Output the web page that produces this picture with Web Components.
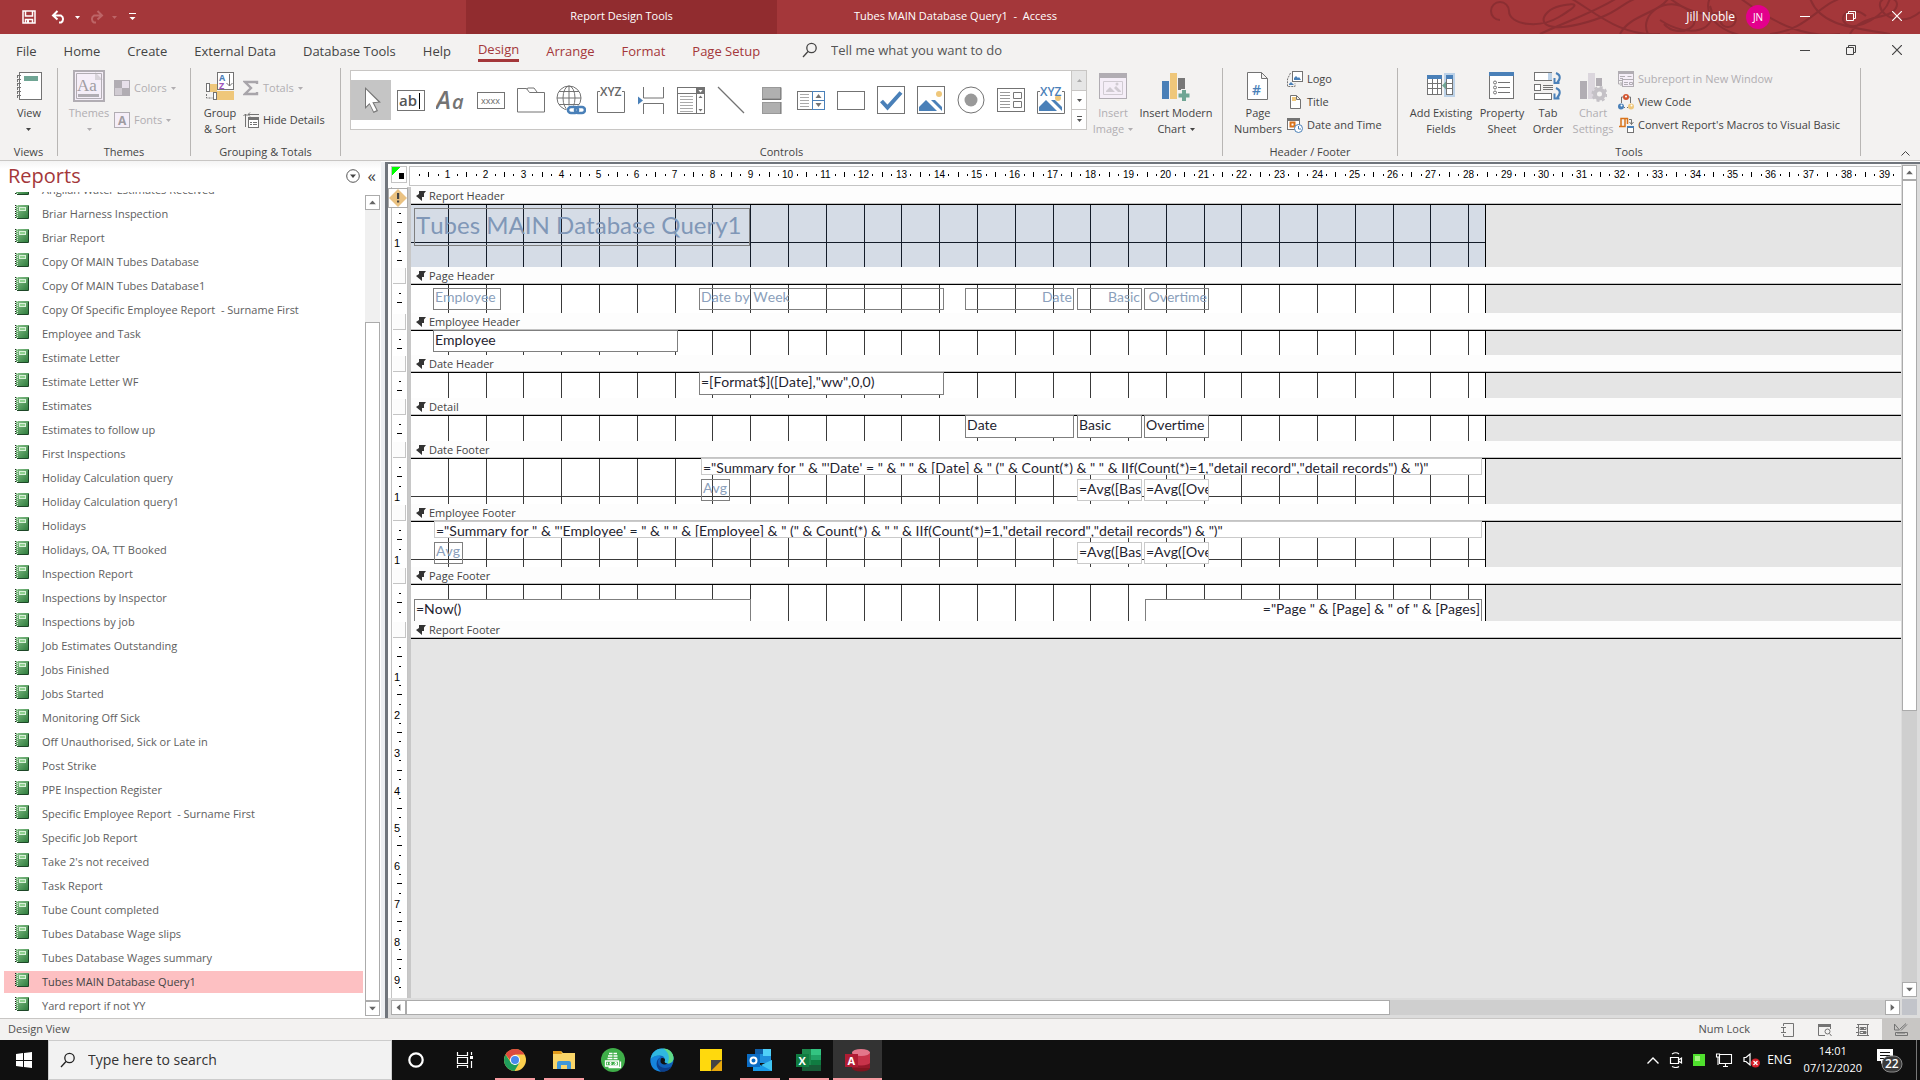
<!DOCTYPE html>
<html lang="en">
<head>
<meta charset="utf-8">
<title>Tubes MAIN Database Query1 - Access</title>
<style>
html,body{margin:0;height:100%;overflow:hidden}
body{font:11px/16px "Open Sans","Noto Sans",sans-serif;color:#444;background:#fff}
</style>
</head>
<body>
<access-app></access-app>
<script>
const BASE = `*{box-sizing:border-box}button{font:inherit;color:inherit;background:none;border:0;padding:0;margin:0}button,input{outline:0}`;
function define(name, render, after) {
  customElements.define(name, class extends HTMLElement {
    connectedCallback() {
      if (this.shadowRoot) return;
      const root = this.attachShadow({ mode: 'open' });
      root.innerHTML = `<style>${BASE}</style>` + render(this);
      if (after) after(this, root);
    }
  });
}

/* ---------- icons: [width, height, markup] ---------- */
const G = '#737373', B = '#4a80b8', Y = '#efc77a', L = '#b1adb3', T = '#6fa594';
const s = (d, c = G, w = 1, x = '') => `<path d="${d}" fill="none" stroke="${c}" stroke-width="${w}" ${x}/>`;
const f = (d, c = G) => `<path d="${d}" fill="${c}"/>`;
const r = (x, y, w, h, c, st = 'none', sw = 1) => `<rect x="${x}" y="${y}" width="${w}" height="${h}" fill="${c}" stroke="${st}" stroke-width="${sw}"/>`;
const t = (x, y, z, txt, c = G, x2 = '') => `<text x="${x}" y="${y}" font-size="${z}" fill="${c}" font-family="Open Sans,sans-serif" ${x2}>${txt}</text>`;
const pic = (o, c1, c2) => f(`M${o} 25V21l7-7 11 11z`, c1) + f('M14 14h4l7 7v4z', c1) + `<circle cx="22" cy="8" r="3" fill="${c2}"/>`;
const ICONS = {
  save: [14, 14, s('M1 1h12v12H1z M3.5 1v5h7V1 M3.5 13V9.5h7V13', '#fff', 1.5) + r(5, 10, 2, 3, '#fff')],
  undo: [16, 14, s('M2 5.5h8a4 4 0 0 1 0 7H8 M6.5 1L2 5.5l4.5 4', '#fff', 2)],
  redo: [16, 14, s('M14 5.5H6a4 4 0 0 0 0 7h2 M9.5 1L14 5.5 9.5 9.5', '#bd6567', 2)],
  down: [5, 3, f('M0 0h5L2.5 3z', 'currentColor')],
  custom: [7, 8, f('M0 0h7v1H0z M0.5 4h6L3.5 7z', '#fff')],
  min: [10, 10, s('M0 5.5h10', 'currentColor')],
  restore: [10, 10, s('M.5 2.5h7v7h-7z M2.5 2.5v-2h7v7h-2', 'currentColor')],
  close: [10, 10, s('M0 0l10 10M10 0L0 10', 'currentColor', 1.2)],
  search: [16, 16, `<circle cx="9.5" cy="6" r="4.7" fill="none" stroke="currentColor" stroke-width="1.3"/>` + s('M6 9.5L1 15', 'currentColor', 1.3)],
  view: [28, 32, r(4.5, 2.5, 22, 27, '#fff', G) + r(9, 6, 14, 5, T) + [5, 9, 13, 17, 21, 25].map(y => s(`M2 ${y}.5h4 M2.5 ${y}v3`, G)).join('')],
  themes: [32, 32, r(1, 1, 30, 30, '#f5eef8', L, 2) + f('M22 2l8 8h-8z', '#d7d2d9') + s('M3.5 3.5h25v25h-25z', L) + t(4, 21, 17, 'Aa', '#a09ca2', 'style="font-family:Liberation Serif"') + r(5, 24, 21, 3, L)],
  colors: [16, 16, r(.5, .5, 15, 15, '#f5eef8', L) + f('M1 1h7v7H1z M8 8h7v7H8z', L) + f('M8 1h7v7H8z', '#e7e0ea') + f('M1 8h7v7H1z', '#d0cbd2')],
  fonts: [16, 16, r(.5, .5, 15, 15, '#f5eef8', L) + t(4, 13, 12, 'A', '#a09ca2', 'font-weight="700"')],
  group: [30, 32, r(12.5, 2.5, 16, 17, '#fff', G) + t(14, 11, 9, 'A', B, 'font-weight="700"') + t(14, 19, 9, 'Z', '#9d57bd', 'font-weight="700"') + s('M24.5 4v12M21.5 13l3 3 3-3', G) + r(4, 14, 8, 8, Y) + r(9, 21, 20, 9, Y) + r(1.5, 13.5, 3, 8, '#fff', G) + r(8.5, 22.5, 3, 7, '#fff', G) + s('M1.5 24v4h6', G, 1, 'stroke-dasharray="2 1"') + s('M12 20.5h17', '#f3f2f1', 1)],
  sigma: [16, 16, s('M14 4V2H2l6 6-6 6h12v-2', '#a8a5aa', 2.4)],
  hide: [16, 16, s('M2.5 2v13M.5 4l2-2 2 2M5 2.5h11M7 .5l-2 2 2 2', G) + r(5.5, 5.5, 10, 10, '#fff', G) + r(5, 5, 11, 3, G) + s('M7 10.5h2M10 10.5h4M7 12.5h2M10 12.5h4', G)],
  arrow: [28, 28, f('M8 1v22l4.500-4.500 4 8.500 4.500-2-4-8 7-.5z', '#777') + f('M9 3.500v17l3.500-3.500 4.300 8.500 2.700-1.300-4.200-8 6-.5z', '#fff')],
  textbox: [28, 28, r(.5, 4.5, 27, 20, '#fff', G) + t(2, 20, 15, 'ab', '#555', 'font-weight="600"') + s('M22.5 7v16', '#000')],
  label: [30, 28, t(0, 23, 25, 'A', G, 'font-weight="600" font-style="italic"') + t(16, 23, 20, 'a', G, 'font-weight="600" font-style="italic"')],
  button: [28, 28, r(.5, 6.5, 27, 16, '#fff', G) + t(4, 17.5, 9, 'xxxx', '#666')],
  tab: [28, 28, s('M.5 2.5h9l3 4h15v19.5H.5z M9.5 3l1.5-1h6l3 4', G)],
  link: [30, 30, `<g fill="none" stroke="${G}"><circle cx="13" cy="13" r="12"/><ellipse cx="13" cy="13" rx="6" ry="12"/><path d="M13 1v24M1 13h24M3 6.5h20M3 19.5h20"/></g><g fill="#fff" stroke="#fff" stroke-width="3"><rect x="12" y="22" width="18" height="7"/></g><g fill="none" stroke="${B}" stroke-width="2.6"><rect x="12" y="22" width="10" height="6" rx="3"/><rect x="19" y="22" width="10" height="6" rx="3"/></g>`],
  nav: [28, 28, s('M3 5.5H.5v21h27v-21H25', G) + t(3, 10, 12, 'XYZ', '#666', 'font-weight="600"')],
  brk: [28, 28, s('M6.5 1v11h20V1 M6.5 28V17.5h20V28', G) + f('M1 10.5l5 4-5 4z', B)],
  combo: [28, 28, r(.5, 1.5, 27, 26, '#fff', G) + s('M.5 7.5h27M19.5 2v26', G) + r(20, 2, 7, 6, G) + f('M21.5 4h4l-2 2.5z', '#fff') + s('M3 10.5h13M3 13.5h13M3 16.5h13M3 19.5h13M3 22.5h13M3 25.5h13', '#aaa') + f('M21.5 12h4l-2-2.5z M21.5 23h4l-2 2.5z')],
  line: [28, 28, s('M1 1l26 26', G, 1.2)],
  toggle: [28, 28, r(5.5, 1.5, 18, 11, '#b0b0b0', '#999') + r(5.5, 16.5, 18, 11, '#b0b0b0', '#999') + s('M5 13.5h19v-12 M24 16v12', G)],
  list: [28, 28, r(.5, 5.5, 27, 18, '#fff', G) + s('M3 8.5h9M3 11.5h9M3 14.5h9M3 17.5h9M3 20.5h9', '#aaa') + r(15.5, 5.5, 12, 18, '#fff', B) + s('M15.5 14.5h12', B) + f('M18.5 12h6l-3-4z M18.5 17h6l-3 4z')],
  rect: [28, 28, r(.5, 5.5, 27, 18, '#fff', G)],
  check: [28, 28, r(.5, .5, 27, 27, '#fff', G) + s('M4.5 15l6 6.5L24 6.5', B, 4)],
  image: [28, 28, r(.5, .5, 27, 27, '#fff', G) + pic(2, B, Y)],
  radio: [28, 28, `<circle cx="14" cy="14" r="13" fill="#fff" stroke="${G}"/><circle cx="14" cy="14" r="6.5" fill="#999"/>`],
  sub: [28, 28, r(.5, 2.5, 27, 23, '#fff', G) + s('M3 6.5h10M3 9.5h10M3 12.5h10M3 15.5h10M3 18.5h10M3 21.5h10', '#999') + s('M16.5 6.5h8v6h-8z M16.5 15.5h8v6h-8z', '#777')],
  chartimg: [28, 28, s('M3 5.5H.5v22h27v-22H25', G) + pic(2, B, 'none') + `<circle cx="21" cy="12" r="3" fill="${Y}"/>` + t(3, 10, 12, 'XYZ', B, 'font-weight="600"')],
  insimg: [28, 32, r(.5, 3.5, 27, 25, '#f5eef8', L) + r(0, 3, 28, 5, L) + s('M4.5 11.5h19v13h-19z', '#d0cbd2') + f('M7 22v-1l4-4 5 5z M15 18l2-2 5 5v1h-3z', '#d0cbd2') + `<circle cx="18" cy="14" r="1.5" fill="#d0cbd2"/>`],
  chart: [30, 32, r(1, 11, 7, 18, B) + r(9, 3, 7, 26, Y) + r(17, 8, 7, 12, '#777') + s('M23 19v12M17 25h12', '#f3f2f1', 6) + s('M23 20v11M17.5 25.5h11', T, 4)],
  page: [24, 32, s('M1.5 2.5h14l6 6v21h-20z M15.5 2.5v6h6', G).replace('fill="none"', 'fill="#fff"') + t(6, 25, 14, '#', B, 'font-weight="600"')],
  logo: [16, 16, r(5.5, .5, 10, 10, '#fff', G) + f('M7 9v-2l2-2 2 2 1-1 2 3z', B) + s('M3.5 2L.5 8v7.5h7.5v-3', G, 1, 'stroke-dasharray="2 1"') + f('M2 14v-1l2-2 3 3z', B)],
  title: [16, 16, s('M3.5 1.5h6l4 4v9h-10z M9.5 1.5v4h4', G).replace('fill="none"', 'fill="#fff"') + r(5, 3, 4, 4, Y)],
  date: [16, 16, r(.5, 1.5, 12, 11, '#fff', G) + r(0, 1, 13, 3, G) + r(3.5, 5.5, 4, 4, '#fff', '#d9731a', 2) + `<circle cx="11.5" cy="11.5" r="4" fill="#fff" stroke="${B}"/>` + s('M11.5 9v3h2.5', B)],
  fields: [28, 32, r(17, 3, 11, 24, '#bcd2e8') + r(.5, 5.5, 14, 19, '#fff', G) + r(0, 5, 15, 4, B) + s('M0 13.5h15M0 18.5h15M5.5 9v16M10.5 9v16', G) + r(19.5, 5.5, 6, 19, '#fff', G) + r(19, 5, 7, 4, B) + s('M19 13.5h7M19 18.5h7', G) + f('M15 15.5l4-4v8z', T)],
  props: [26, 32, r(.5, 2.5, 24, 26, '#fff', G) + r(0, 2, 25, 4, B) + [12, 17, 22].map(y => `<circle cx="6" cy="${y}.5" r="1.5" fill="none" stroke="${G}"/>` + s(`M9 ${y}.5h12`, G)).join('')],
  order: [28, 32, r(.5, 2.5, 17, 8, '#fff', G) + r(14, 3, 4, 7, '#bcd2e8') + r(.5, 14.5, 6, 6, '#fff', G) + s('M9 15.5h10M9 17.5h10M9 19.5h10', G) + r(.5, 23.5, 17, 6, '#fff', G) + s('M22 3q7 3 1 10M20.5 8v5h5 M22 18q7 3 1 10M20.5 23.5v5h5', B, 2)],
  settings: [28, 32, r(1, 11, 7, 18, L) + r(9, 3, 7, 26, '#dbd6dd') + r(17, 8, 6, 8, L) + `<circle cx="20.5" cy="24" r="4.5" fill="#f3f2f1" stroke="#c4c1c6" stroke-width="4"/><circle cx="20.5" cy="24" r="7" fill="none" stroke="#c4c1c6" stroke-width="2" stroke-dasharray="3 2.5"/>`],
  subwin: [16, 16, r(.5, .5, 15, 9, '#f5eef8', L) + r(0, 0, 16, 3, L) + s('M2 5.5h5M2 7.5h3M9.5 5.5h4', L) + r(4.5, 8.5, 11, 7, '#f5eef8', L) + s('M6 11.5h4M6 13.5h4M11.5 11.5h3v2h-3z M.5 10v3h4M2.5 11l2 2-2 2', L)],
  code: [16, 16, s('M3.5 9V3H5M12.5 9V3H11M6 13.5h1M9 13.5h1', G) + `<circle cx="8" cy="3" r="3" fill="#d2542f"/><circle cx="3" cy="12.5" r="3" fill="${B}"/><circle cx="13" cy="12.5" r="3" fill="${Y}"/><circle cx="8" cy="2.5" r="1" fill="#fff"/><circle cx="3.5" cy="11.5" r="1" fill="#fff"/><circle cx="13.5" cy="11.5" r="1" fill="#fff"/>`],
  convert: [16, 16, s('M3 9V1.5h7M9.5 1v6M1 9.5h6V2', '#d9731a', 1.5) + s('M11 2.5h2.5v5M11.5 5l2 2.5 2-2.5', G) + r(9.5, 9.5, 6, 6, '#fff', G) + r(9, 9, 7, 2, B)],
  up: [9, 5, s('M.5 4.5l4-4 4 4', '#444')],
  book: [14, 14, `<defs><linearGradient id="g" x1="0" y1="0" x2="1" y2="1"><stop offset="0" stop-color="#8cc58e"/><stop offset="1" stop-color="#2b7a3a"/></linearGradient></defs>` + r(1, 0, 13, 13, 'url(#g)') + s('M13.5 1v12.5H2', '#1d4727') + r(4.5, 2.5, 6, 3, '#8fd08f', '#d9f0d9') + s('M.5 0v13', '#222', 1, 'stroke-dasharray="1 1"') + s('M2.5 0v13', '#cfe6cf', 1, 'stroke-dasharray="1 1"')],
  circle: [14, 14, `<circle cx="7" cy="7" r="6.3" fill="#fff" stroke="#555"/>` + f('M4 5.5h6L7 9z', '#444')],
  bolt: [10, 10, f('M3 0h7L8 2.500V6H6v4L0 5l3-2z', '#333')],
  warn: [18, 18, f('M9 0l9 9-9 9-9-9z', '#eac282') + f('M8 4h2.2v6H8z M8 11.5h2.2v2H8z', '#444')],
  st1: [14, 14, s('M3.5 3V.5h10v13h-10V11M1 4.5h5M1 9.5h5M3.5 4v6', G)],
  st2: [14, 14, s('M7 12.5H.5V1.5h12V6', G) + r(0, 1, 13, 3, G) + `<circle cx="9.5" cy="8.5" r="2.5" fill="none" stroke="${G}"/>` + s('M11.5 10.5l2 2.5', G)],
  st3: [14, 14, s('M2.5 1v12M11.5 1v12M1 1.5h12M0 4.500h3M0 9.500h3M1 12.5h12', G) + s('M5 5.5h3M7 9.500h3M4 4.500h6v2H4zM4 8.500h6v2H4z', G)],
  st4: [14, 14, s('M.5 1v6h5zM6 6l6-5.5M7 7.5l6-6M1.5 9.5h12v3h-12z M4 10v1M6 10v1M8 10v1M10 10v1', G)],
  win: [16, 16, f('M0 2l7-1v7H0z M8 1l8-1v8H8z M0 9h7v6l-7-1z M8 9h8v7l-8-1z', '#fff')],
  cortana: [16, 16, `<circle cx="8" cy="8" r="6.7" fill="none" stroke="#fff" stroke-width="2.2"/>`],
  task: [18, 16, s('M1.5 0v3.5h10V0M1.5 16v-2.5h10V16M1.5 5.5h10v6h-10z M15.5 0v3M15.5 9v7', '#fff', 1.2) + r(14, 4, 3, 3, '#fff')],
  chrome: [24, 24, `<circle cx="12" cy="12" r="11" fill="#fbcf4d"/>` + f('M12 1A11 11 0 0 1 21.5 6.5H12L7 12 2.5 6.5A11 11 0 0 1 12 1z', '#dd4b3e') + f('M2.5 6.5A11 11 0 0 0 11.5 23l5-8.5-4.5 2L7.5 14z', '#1f9d5b') + `<circle cx="12" cy="12" r="5" fill="#fff"/><circle cx="12" cy="12" r="4" fill="#4a89ee"/>`],
  folder: [24, 24, f('M1 3h8l2 2h12v16H1z', '#f9d568') + f('M1 3h8l1 3H1z', '#e19a1a') + f('M5 21v-6q0-2 2-2h10q2 0 2 2v6h-4v-4H9v4z', '#3f97d8')],
  sage: [24, 24, `<circle cx="12" cy="12" r="12" fill="#3fae49"/>` + s('M8 5.5h3.500M12.500 5.5h3.500M7 8h4.500M12.500 8h4M6.500 10.500h5M12.500 10.500h4M4.500 13h13v5h-13zM7.500 19.500h12v-6', '#fff', 1.3) + s('M6.500 14.500v2M9 14.500h1v2H9zM12 16.500h.5M14 14.500h1.500v2H14z', '#fff')],
  edge: [24, 24, `<circle cx="12" cy="12" r="11.5" fill="#0f5fb8"/>` + f('M.5 12C1 5 6 .5 12 .5c7 0 11.500 5 11.500 9.500 0 4-3 5.500-6 5.500-3 0-4-1-3.500-2 2-3-.5-6-4-6C5.500 7.500 2 9 .5 12z', '#2fb8e0') + f('M13 .5c7 0 10.500 5 10.500 9.500 0 4-3 5.500-6 5.500 3-6 1-12-4.500-15z', '#5fd986') + f('M11 9c-5 2-4 11 4 11 3 0 5-1 7-2-2 4-6 6-10 5.500C4 22 5 11 11 9z', '#0c3f8c') + f('M.5 12C3 7 9 7 11 9 5 11 5 20 11 23.500 4 23.500 0 18 .5 12z', '#1685dc') + f('M11 10.500c2-1 4.500 0 4 2-1 1.500 0 3 2.500 3-3 2-7 .5-7-2 0-1 0-2 .5-3z', '#111')],
  sticky: [24, 24, f('M1 1h22v11L12 23H1z', '#ffd90d') + f('M12 12h11L12 23z', '#444') + f('M23 12v11H12z', '#e8a80c')],
  outlook: [26, 24, r(8, 1, 16, 14, '#1f8fdc') + r(16, 1, 8, 7, '#50d0f8') + r(8, 1, 8, 5, '#0f5ea8') + f('M6 12l9 6 10-6v11H6z', '#1a9ae8') + f('M25 12v11L14 17z', '#3fc4f2') + r(0, 6, 13, 13, '#0b6cc4') + `<circle cx="6.5" cy="12.5" r="3" fill="none" stroke="#fff" stroke-width="2"/>`],
  excel: [26, 24, r(6, 1, 10, 22, '#1d8a4e') + r(15, 1, 10, 11, '#33c481') + r(15, 7, 10, 6, '#21a366') + r(15, 12, 10, 6, '#107c41') + r(6, 17, 19, 6, '#185c37') + r(0, 6, 13, 13, '#107c41') + t(2.5, 16.5, 11, 'X', '#fff', 'font-weight="700"')],
  access: [26, 24, r(7, 4, 18, 16, '#c8334a') + `<ellipse cx="16" cy="20" rx="9" ry="3.5" fill="#80151f"/>` + r(7, 15, 18, 5, '#95182a') + `<ellipse cx="16" cy="14.500" rx="9" ry="3" fill="#c8334a"/><ellipse cx="16" cy="4.5" rx="9" ry="3.5" fill="#e3768a"/>` + r(0, 6, 13, 13, '#b01c33') + t(2.5, 16.5, 11, 'A', '#fff', 'font-weight="700"')],
  tcaret: [12, 7, s('M.5 6.5L6 1l5.5 5.5', '#fff', 1.4)],
  meet: [14, 16, s('M1.5 5.5h8v6h-8zM9.5 8l3-2v5l-3-2M3 2q4-2.5 7 0M3 14.5q4 2 7 0', '#fff', 1.2)],
  green: [12, 12, r(0, 0, 12, 12, '#4fe02d') + r(2, 2, 5, 5, '#a2f47f')],
  monitor: [18, 14, s('M4.5 3.5v7h12v-9H5M8 13.5h5M10.5 11v2M1.5 1v3h3V1z M3 4v8', '#fff', 1.1)],
  sound: [18, 16, s('M1 5.5h2l4-3.5v11L3 9.5H1z', '#fff', 1.2) + `<circle cx="12.5" cy="11" r="4.5" fill="#d8202a"/>` + s('M10.5 9l4 4M14.5 9l-4 4', '#fff', 1.2)],
  notify: [28, 26, f('M1 2h16v12H9l-4 3v-3H1z', '#fff') + s('M4 5.5h10M4 8.5h10M4 11.5h6', '#111') + `<rect x="6" y="9" width="20" height="16" rx="8" fill="#3a3a3a" stroke="#8a8a8a"/>` + t(9, 21, 12, '22', '#fff', 'font-weight="600"')]
};
define('app-icon', el => {
  const [w, h, m] = ICONS[el.getAttribute('name')];
  return `<style>:host{display:block;flex:none;width:${w}px;height:${h}px}svg{display:block}</style><svg width="${w}" height="${h}" viewBox="0 0 ${w} ${h}" aria-hidden="true">${m}</svg>`;
});
const I = n => `<app-icon name="${n}"></app-icon>`;

/* ---------- title bar ---------- */
define('window-buttons', () => `<style>:host{display:flex;align-self:stretch}button{width:46px;display:grid;place-items:center;padding-bottom:2px}</style>
<button aria-label="Minimize">${I('min')}</button><button aria-label="Restore">${I('restore')}</button><button aria-label="Close">${I('close')}</button>`);

define('title-bar', () => `<style>
:host{display:grid;grid-template-columns:466px 311px 1fr auto;height:34px;flex:none;background:#a4373a;color:#fff;font-size:11px;position:relative}
.qat{display:flex;align-items:center;gap:8px;padding-left:22px}
.qat .first{margin-right:7px}.dim{color:#bd6567}
.qat .last{margin-left:4px}
.ctx{background:#912c2f;display:grid;place-items:center;padding-bottom:2px}
.title{white-space:pre;display:flex;align-items:center;padding:0 0 2px 77px}
.flourish{position:absolute;right:0;top:0}
.user{display:flex;align-items:center;position:relative;font-size:12px}
.av{width:24px;height:24px;border-radius:50%;background:#e3008c;display:grid;place-items:center;margin:0 12px 0 11px;font-size:10px}
</style>
<svg class="flourish" width="450" height="34" viewBox="0 0 450 34" fill="none" stroke="#8b2e32" stroke-width="2"><path d="M30 20a9 9 0 1 1 9-9c0 14 30 18 50 6S110 2 90 6 60 36 110 24 150-6 190-4M70 34C100 20 130 10 150-4M100-2c20 10 50 40 90 36M150 34c10-20 40-20 50-38M190 20c30 20 60 10 50-14M178 34c-10-20 20-40 40-24s-10 30-24 14M240-2c-10 20 20 50 80 36M250 20a8 8 0 1 0 8-9c-10 2-30 10-60-14M270-2c40 30 70 40 100 36M300 34C340 30 350 0 380-4M340-2c10 30 50 30 80 36M380 34c10-20 40-14 46-26s-18-14-16-2 24 20 40 6M396 16c-14-12-30 0-20 8s40-8 44-26"/></svg>
<div class="qat"><button class="first" aria-label="Save">${I('save')}</button><button aria-label="Undo">${I('undo')}</button>${I('down')}<button aria-label="Redo">${I('redo')}</button><span class="dim">${I('down')}</span><button class="last" aria-label="Customize">${I('custom')}</button></div>
<div class="ctx">Report Design Tools</div>
<div class="title">Tubes MAIN Database Query1  -  Access</div>
<div class="user"><span>Jill Noble</span><span class="av">JN</span><window-buttons></window-buttons></div>`);

/* ---------- tabs ---------- */
define('ribbon-tabs', () => `<style>
:host{display:flex;height:34px;flex:none;align-items:flex-start;font-size:13px;padding-left:3px}
button.t{padding:6px 14px 0;height:28px;line-height:19px;white-space:nowrap}
button.t{padding-left:13px}
.c{color:#a4373a}
.on::after{content:"";display:block;height:3px;background:#a4373a}
label{display:flex;align-items:center;gap:13px;margin-left:28px;height:32px;flex:1}
input{border:0;background:none;font:inherit;width:300px;padding:0;color:#555}input::placeholder{color:#555;opacity:1}
</style>
<button class="t">File</button><button class="t">Home</button><button class="t">Create</button><button class="t">External Data</button><button class="t">Database Tools</button><button class="t">Help</button><button class="t c on">Design</button><button class="t c">Arrange</button><button class="t c">Format</button><button class="t c">Page Setup</button>
<label>${I('search')}<input aria-label="Tell me what you want to do" placeholder="Tell me what you want to do"></label>
<window-buttons></window-buttons>`);

/* ---------- ribbon ---------- */
define('ribbon-group', el => `<style>
:host{display:flex;flex-direction:column;height:88px;border-right:1px solid #b8b6b4;flex:none}
.b{display:flex;gap:2px;height:76px;padding-left:8px;flex:none}
.l{text-align:center;line-height:16px}
</style><div class="b"><slot></slot></div><div class="l">${el.getAttribute('label')}</div>`);
define('ribbon-big', el => `<style>
:host{display:block;flex:none}
button{width:100%;padding-top:2px;display:flex;flex-direction:column;align-items:center;gap:3px;color:${el.hasAttribute('off') ? '#b1aeb1' : '#444'}}
.x{display:block;height:32px;white-space:nowrap;text-align:center}.x span{display:flex;align-items:center;justify-content:center;gap:4px;height:16px}
</style><button>${I(el.getAttribute('icon'))}<span class="x">${el.getAttribute('text').split('|').map(x => `<span>${x.replace('~', I('down'))}</span>`).join('')}</span></button>`);
define('ribbon-small', el => `<style>
:host{display:flex;align-items:center}
button{display:flex;align-items:center;gap:4px;white-space:nowrap;color:${el.hasAttribute('off') ? '#b1aeb1' : '#444'}}
</style><button>${I(el.getAttribute('icon'))}<slot></slot>${el.hasAttribute('menu') ? I('down') : ''}</button>`);
define('ribbon-stack', el => {
  const two = el.hasAttribute('two');
  return `<style>:host{display:flex;flex-direction:column;${two ? 'padding-top:4px' : 'gap:1px'}}::slotted(*){height:${two ? 32 : 22}px}</style><slot></slot>`;
});
define('control-gallery', () => `<style>
:host{display:flex;flex:1;height:60px;margin:2px 0 0 1px;border:1px solid #c8c6c4;background:#fff}
.i{flex:1;display:flex;align-items:center}
.i button{width:40px;flex:none;height:40px;display:grid;place-items:center}.i button:first-child{background:#c5c5c5}
.s{width:15px;flex:none;display:flex;flex-direction:column;border-left:1px solid #c8c6c4}
.s button{flex:1;display:grid;place-items:center;color:#555}.s button+button{border-top:1px solid #c8c6c4}
.s button:first-child{background:#e6e6e6;color:#aaa}.s button:first-child app-icon{transform:rotate(180deg)}
.s button:last-child app-icon{border-top:1px solid #555;padding-top:2px;height:7px}
</style><div class="i">${'arrow textbox label button tab link nav brk combo line toggle list rect check image radio sub chartimg'.split(' ').map(n => `<button aria-label="${n}">${I(n)}</button>`).join('')}</div>
<div class="s"><button aria-label="Up">${I('down')}</button><button aria-label="Down">${I('down')}</button><button aria-label="More">${I('down')}</button></div>`);
define('ribbon-bar', () => `<style>
:host{display:flex;height:93px;flex:none;border-bottom:1px solid #c8c6c4;color:#444}
.end{flex:1;display:flex;align-items:flex-end;justify-content:flex-end;padding:0 10px 4px 0}
.g1{width:58px}.g2{width:133px}.g3{width:150px}.g4{width:882px}.g5{width:175px}.g6{width:463px}
.w40{width:40px}.w42{width:42px}.w46{width:46px}.w48{width:48px}.w54{width:54px}.w70{width:70px}.w74{width:74px;margin-right:9px}
</style>
<ribbon-group class="g1" label="Views"><ribbon-big class="w42" icon="view" text="View|~"></ribbon-big></ribbon-group>
<ribbon-group class="g2" label="Themes"><ribbon-big off class="w46" icon="themes" text="Themes|~"></ribbon-big><ribbon-stack two><ribbon-small off menu icon="colors">Colors</ribbon-small><ribbon-small off menu icon="fonts">Fonts</ribbon-small></ribbon-stack></ribbon-group>
<ribbon-group class="g3" label="Grouping &amp; Totals"><ribbon-big class="w42" icon="group" text="Group|&amp;amp; Sort"></ribbon-big><ribbon-stack two><ribbon-small off menu icon="sigma">Totals</ribbon-small><ribbon-small icon="hide">Hide Details</ribbon-small></ribbon-stack></ribbon-group>
<ribbon-group class="g4" label="Controls"><control-gallery></control-gallery><ribbon-big off class="w48" icon="insimg" text="Insert|Image~"></ribbon-big><ribbon-big class="w74" icon="chart" text="Insert Modern|Chart~"></ribbon-big></ribbon-group>
<ribbon-group class="g5" label="Header / Footer"><ribbon-big class="w54" icon="page" text="Page|Numbers"></ribbon-big><ribbon-stack><ribbon-small icon="logo">Logo</ribbon-small><ribbon-small icon="title">Title</ribbon-small><ribbon-small icon="date">Date and Time</ribbon-small></ribbon-stack></ribbon-group>
<ribbon-group class="g6" label="Tools"><ribbon-big class="w70" icon="fields" text="Add Existing|Fields"></ribbon-big><ribbon-big class="w48" icon="props" text="Property|Sheet"></ribbon-big><ribbon-big class="w40" icon="order" text="Tab|Order"></ribbon-big><ribbon-big off class="w46" icon="settings" text="Chart|Settings"></ribbon-big><ribbon-stack><ribbon-small off icon="subwin">Subreport in New Window</ribbon-small><ribbon-small icon="code">View Code</ribbon-small><ribbon-small icon="convert">Convert Report's Macros to Visual Basic</ribbon-small></ribbon-stack></ribbon-group>
<div class="end">${I('up')}</div>`);

/* ---------- scroll bar ---------- */
define('scroll-bar', el => {
  const h = el.hasAttribute('horizontal'), a = +el.getAttribute('from'), b = +el.getAttribute('to');
  return `<style>
:host{display:flex;flex-direction:${h ? 'row' : 'column'};${h ? 'height' : 'width'}:15px;background:${el.getAttribute('track') || '#cfcfcf'}}
button{flex:none;width:15px;height:15px;background:#fff;border:1px solid #ababab;display:grid;place-items:center;color:#666}
.a{flex:${a} 0 0}.m{flex:${b - a} 0 0;background:#fff;border:1px solid #ababab}.z{flex:${1000 - b} 0 0}
button app-icon{transform:scale(1.4) rotate(${h ? 90 : 180}deg)}button:last-child app-icon{transform:scale(1.4) rotate(${h ? -90 : 0}deg)}
</style><button aria-label="Back">${I('down')}</button><div class="a"></div><div class="m"></div><div class="z"></div><button aria-label="Forward">${I('down')}</button>`;
});

/* ---------- navigation pane ---------- */
define('nav-item', el => `<style>
:host{display:block;height:24px;flex:none;padding:1px 2px 1px 4px}
button{width:100%;height:22px;display:flex;align-items:center;gap:13px;padding-left:11px;text-align:left;white-space:pre;color:#5e5e5e}
:host([selected]) button{background:#fdc0c2;color:#444}
app-icon{margin-bottom:4px}
</style><button>${I('book')}<slot></slot></button>`);
const REPORTS = ['Anglian Water Estimates Received', 'Briar Harness Inspection', 'Briar Report', 'Copy Of MAIN Tubes Database', 'Copy Of MAIN Tubes Database1', 'Copy Of Specific Employee Report  - Surname First', 'Employee and Task', 'Estimate Letter', 'Estimate Letter WF', 'Estimates', 'Estimates to follow up', 'First Inspections', 'Holiday Calculation query', 'Holiday Calculation query1', 'Holidays', 'Holidays, OA, TT Booked', 'Inspection Report', 'Inspections by Inspector', 'Inspections by job', 'Job Estimates Outstanding', 'Jobs Finished', 'Jobs Started', 'Monitoring Off Sick', 'Off Unauthorised, Sick or Late in', 'Post Strike', 'PPE Inspection Register', 'Specific Employee Report  - Surname First', 'Specific Job Report', "Take 2's not received", 'Task Report', 'Tube Count completed', 'Tubes Database Wage slips', 'Tubes Database Wages summary', 'Tubes MAIN Database Query1', 'Yard report if not YY'];
define('nav-pane', () => `<style>
:host{display:flex;flex-direction:column;width:381px;flex:none;background:linear-gradient(#f4f4f4,#fff 8px);min-height:0}
header{display:flex;align-items:center;height:31px;padding:0 5px 2px 8px;gap:8px;flex:none}
h1{margin:0;flex:1;font-size:20px;line-height:28px;font-weight:400;color:#a4373a}
header span{font-size:17px;line-height:16px}
.w{flex:1;display:flex;min-height:0}
.l{flex:1;display:flex;flex-direction:column;justify-content:flex-end;overflow:hidden}
scroll-bar{margin:3px 1px 2px 0}
</style><header><h1>Reports</h1>${I('circle')}<span>«</span></header>
<div class="w"><div class="l">${REPORTS.map(n => `<nav-item${n.startsWith('Tubes MAIN') ? ' selected' : ''}>${n}</nav-item>`).join('')}</div><scroll-bar from="142" to="1000" track="#f0f0f0"></scroll-bar></div>`);

/* ---------- designer ---------- */
const CM = 37.795;
const line = (x1, y1, x2, y2, c) => `<path d="M${x1} ${y1}L${x2} ${y2}" stroke="${c}"/>`;
define('ruler-top', () => {
  let m = '';
  for (let q = 1; q < 39.5 * 4; q++) {
    const x = Math.floor(q * CM / 4) + .5;
    if (q % 4 === 0) m += `<text x="${x}" y="11" text-anchor="middle">${q / 4}</text>`;
    else m += q % 4 === 2 ? line(x, 5, x, 10, '#000') : line(x, 7, x, 9, '#000');
  }
  return `<style>:host{display:block;height:20px;border:solid #c4c4c4;border-width:1px 0 1px 1px;background:#fff;overflow:hidden}svg{display:block;font:10px "Liberation Sans",sans-serif}</style><svg width="100%" height="18">${m}</svg>`;
});
define('report-section', el => {
  const len = +el.getAttribute('length'), name = el.getAttribute('name'), H = len || 360;
  let v = '', g = '';
  for (let q = 1; q * CM / 4 < H - 2; q++) {
    const y = Math.floor(q * CM / 4) + .5;
    v += q % 4 === 0 ? `<text x="5" y="${y + 5}" text-anchor="middle">${q / 4}</text>` : q % 4 === 2 ? line(5, y, 10, y, '#000') : line(7, y, 9, y, '#000');
  }
  const c = el.hasAttribute('tint') ? '#141c29' : '#3a3a3a';
  for (let n = 1; n < 29; n++) { const x = Math.floor(n * CM - .5) + .5; g += line(x, 0, x, H, c); }
  for (let n = 1; n * CM < H; n++) { const y = Math.floor(n * CM) + 1.5; g += line(0, y, 1075, y, c); }
  return `<style>
:host{display:grid;grid-template-columns:17px 1fr;column-gap:0;${len ? 'flex:none' : 'flex:1;min-height:0'};grid-template-rows:17px ${len ? len + 'px' : '1fr'}}
.v{background:#fff;border:solid #c4c4c4;border-width:0 1px;overflow:hidden}
.stub{padding:1px 1px 0}.stub i{display:block;height:16px;background:#fcfcfc;border:solid #c4c4c4;border-width:0 1px 1px 0}
.h{display:flex;align-items:center;gap:3px;padding:2px 0 0 5px;background:#fdfdfd;border-bottom:1px solid #c4c4c4;font-size:11px;line-height:14px}
.h,.body{border-left:3px solid #c8c8c8}
.body{position:relative;background:#e5e5e5;overflow:hidden}
.body::before{content:"";position:absolute;left:0;right:0;top:0;height:1px;background:#000}
.page{display:${len ? 'block' : 'none'};width:1075px;height:100%;background:${el.hasAttribute('tint') ? '#d5dce6' : '#fff'};border-right:1px solid #000}
svg{display:block}.v svg{font:11px "Liberation Sans",sans-serif}
</style><div class="v stub"><i></i></div><div class="h">${I('bolt')}<span>${name}</span></div>
<div class="v"><svg width="15" height="${H}">${v}</svg></div>
<div class="body"><div class="page"><svg width="1074" height="${H}">${g}</svg></div><slot></slot></div>`;
});
define('report-control', el => {
  const [x, y, w, h] = el.getAttribute('box').split(' ');
  const k = el.getAttribute('kind');
  const css = k === 'title' ? 'font-size:24px;line-height:32px;color:#8097b7' : k === 'label' ? 'font-size:14px;line-height:16px;color:#8b9fbb' : 'font-size:14px;line-height:18px;color:#1f2430;background:#fff';
  return `<style>:host{position:absolute;left:${x}px;top:${y}px;width:${w}px;height:${h}px;box-sizing:border-box;border:1px solid ${el.hasAttribute('soft') ? '#cacaca' : '#7f7f7f'};padding:0 1px;overflow:hidden;white-space:pre;font-family:Lato,sans-serif;font-kerning:none;${css};text-align:${el.hasAttribute('right') ? 'right' : 'left'}}</style><slot></slot>`;
});
define('report-designer', () => {
  const c = (kind, box, txt, x = '') => `<report-control kind="${kind}" box="${box}" ${x}>${txt}</report-control>`;
  const sum = a => `="Summary for " &amp; "'${a}' = " &amp; " " &amp; [${a}] &amp; " (" &amp; Count(*) &amp; " " &amp; IIf(Count(*)=1,"detail record","detail records") &amp; ")"`;
  return `<style>
:host{flex:1;min-width:0;display:grid;grid-template-columns:1fr 19px;grid-template-rows:1fr 20px;border-left:4px solid #edeff2;margin-top:1px;background:#dcdcdc}
.f{grid-column:1/3;grid-row:1/3;border:solid #70757c;border-width:2px 0 0 3px}
.main{grid-area:1/1;display:flex;flex-direction:column;min-height:0;min-width:0;margin:2px 0 0 3px;padding:2px 0 0 3px;background:#fdfdfd}
.top{display:grid;grid-template-columns:16px 1fr;column-gap:2px;padding-bottom:1px;flex:none}
.corner{height:17px;border:1px solid #c4c4c4;background:linear-gradient(135deg,#0f0 0 6px,transparent 6px) #fff;display:grid;place-items:center}
.corner i{width:5px;height:6px;background:#000;margin:2px 0 0 4px}
.canvas{flex:1;display:flex;flex-direction:column;min-height:0;overflow:hidden}
.warn{position:absolute;left:388px;top:188px;width:20px;height:20px;background:#fff;border:1px solid #aaa}
.v{grid-area:1/2;margin:3px 0 1px 1px}
.bot{grid-area:2/1;margin:2px 1px 3px 6px;display:flex}
.bot scroll-bar{flex:1}.k{grid-area:2/2;background:#c2c4ca;margin:1px 3px 3px 1px}
</style>
<div class="f"></div>
<div class="main"><div class="top"><div class="corner"><i></i></div><ruler-top></ruler-top></div>
<div class="canvas">
<report-section name="Report Header" length="63" tint>${c('title', '3 4 336 38', 'Tubes MAIN Database Query1')}</report-section>
<report-section name="Page Header" length="29">${c('label', '22 4 68 22', 'Employee')}${c('label', '288 4 245 22', 'Date by Week')}${c('label', '554 4 109 22', 'Date', 'right')}${c('label', '666 4 65 22', 'Basic', 'right')}${c('label', '733 4 65 22', 'Overtime', 'right')}</report-section>
<report-section name="Employee Header" length="25">${c('text', '22 0 245 22', 'Employee')}</report-section>
<report-section name="Date Header" length="26">${c('text', '288 0 245 23', '=[Format$]([Date],"ww",0,0)')}</report-section>
<report-section name="Detail" length="26">${c('text', '554 0 109 23', 'Date')}${c('text', '666 0 65 23', 'Basic')}${c('text', '733 0 65 23', 'Overtime')}</report-section>
<report-section name="Date Footer" length="46">${c('text', '290 0 781 17', sum('Date'), 'soft')}${c('label', '290 21 29 22', 'Avg')}${c('text', '666 21 65 22', '=Avg([Basic])', 'soft')}${c('text', '733 21 65 22', '=Avg([Overtime])', 'soft')}</report-section>
<report-section name="Employee Footer" length="46">${c('text', '23 0 1048 17', sum('Employee'), 'soft')}${c('label', '23 21 29 22', 'Avg')}${c('text', '666 21 65 22', '=Avg([Basic])', 'soft')}${c('text', '733 21 65 22', '=Avg([Overtime])', 'soft')}</report-section>
<report-section name="Page Footer" length="37">${c('text', '3 15 337 30', '=Now()')}${c('text', '734 15 337 30', '="Page " &amp; [Page] &amp; " of " &amp; [Pages]', 'right')}</report-section>
<report-section name="Report Footer"></report-section>
</div></div>
<scroll-bar class="v" from="0" to="661"></scroll-bar>
<div class="bot"><scroll-bar horizontal from="0" to="665"></scroll-bar></div><div class="k"></div>
<div class="warn">${I('warn')}</div>`;
});

/* ---------- status bar and task bar ---------- */
define('status-bar', () => `<style>
:host{display:flex;align-items:center;height:22px;flex:none;background:#f3f2f1;border-top:1px solid #c8c6c4;padding-left:8px;color:#505050}
span{padding-bottom:2px}
.sp{flex:1}.n{margin-right:18px}button{width:38px;height:21px;display:grid;place-items:center}button:last-child{background:#c8c6c4}
</style><span>Design View</span><span class="sp"></span><span class="n">Num Lock</span>${['st1', 'st2', 'st3', 'st4'].map(n => `<button aria-label="${n}">${I(n)}</button>`).join('')}`);
define('task-bar', () => `<style>
:host{display:flex;height:40px;flex:none;background:#101010;color:#fff}
button{display:grid;place-items:center}
.start,.n{width:48px}
label{width:344px;background:#f2f2f2;border:1px solid #ccc;display:flex;align-items:center;gap:12px;padding-left:11px;color:#222}
input{border:0;background:none;font:14px/20px "Open Sans",sans-serif;flex:1;min-width:0;padding:0}input::placeholder{color:#333;opacity:1}
.a{width:49px;border-bottom:2px solid transparent;padding-top:2px}
.apps{display:flex;padding-left:1px}
.run{background:linear-gradient(#f79ba1,#f79ba1) bottom/40px 2px no-repeat border-box}.on{background:#333;border-color:#f79ba1}
.sp{flex:1}.tray{display:flex;align-items:center;gap:10px}.tray span{font-size:12px;margin-left:-4px}
.clock{font-size:11px;line-height:17px;text-align:center;margin:0 14px 0 12px;padding-top:2px}
.desk{width:4px;border-left:1px solid #777;margin-left:12px}
</style>
<button class="start" aria-label="Start">${I('win')}</button>
<label>${I('search')}<input aria-label="Search" placeholder="Type here to search"></label>
<button class="n" aria-label="Cortana">${I('cortana')}</button><button class="a" aria-label="Task View">${I('task')}</button>
<div class="apps">${[['chrome', 'run'], ['folder', 'run'], ['sage', ''], ['edge', ''], ['sticky', ''], ['outlook', 'run'], ['excel', 'run'], ['access', 'on']].map(([n, k]) => `<button class="a ${k}" aria-label="${n}">${I(n)}</button>`).join('')}</div>
<span class="sp"></span><div class="tray">${I('tcaret')}${I('meet')}${I('green')}${I('monitor')}${I('sound')}<span>ENG</span></div>
<div class="clock">14:01<br>07/12/2020</div><button aria-label="Notifications">${I('notify')}</button><span class="desk"></span>`);

define('access-app', () => `<style>
:host{display:flex;flex-direction:column;height:100vh;background:#f3f2f1;position:relative}
.mid{flex:1;display:flex;min-height:0;background:#fff}
</style><title-bar></title-bar><ribbon-tabs></ribbon-tabs><ribbon-bar></ribbon-bar>
<div class="mid"><nav-pane></nav-pane><report-designer></report-designer></div>
<status-bar></status-bar><task-bar></task-bar>`);
</script>
</body>
</html>
